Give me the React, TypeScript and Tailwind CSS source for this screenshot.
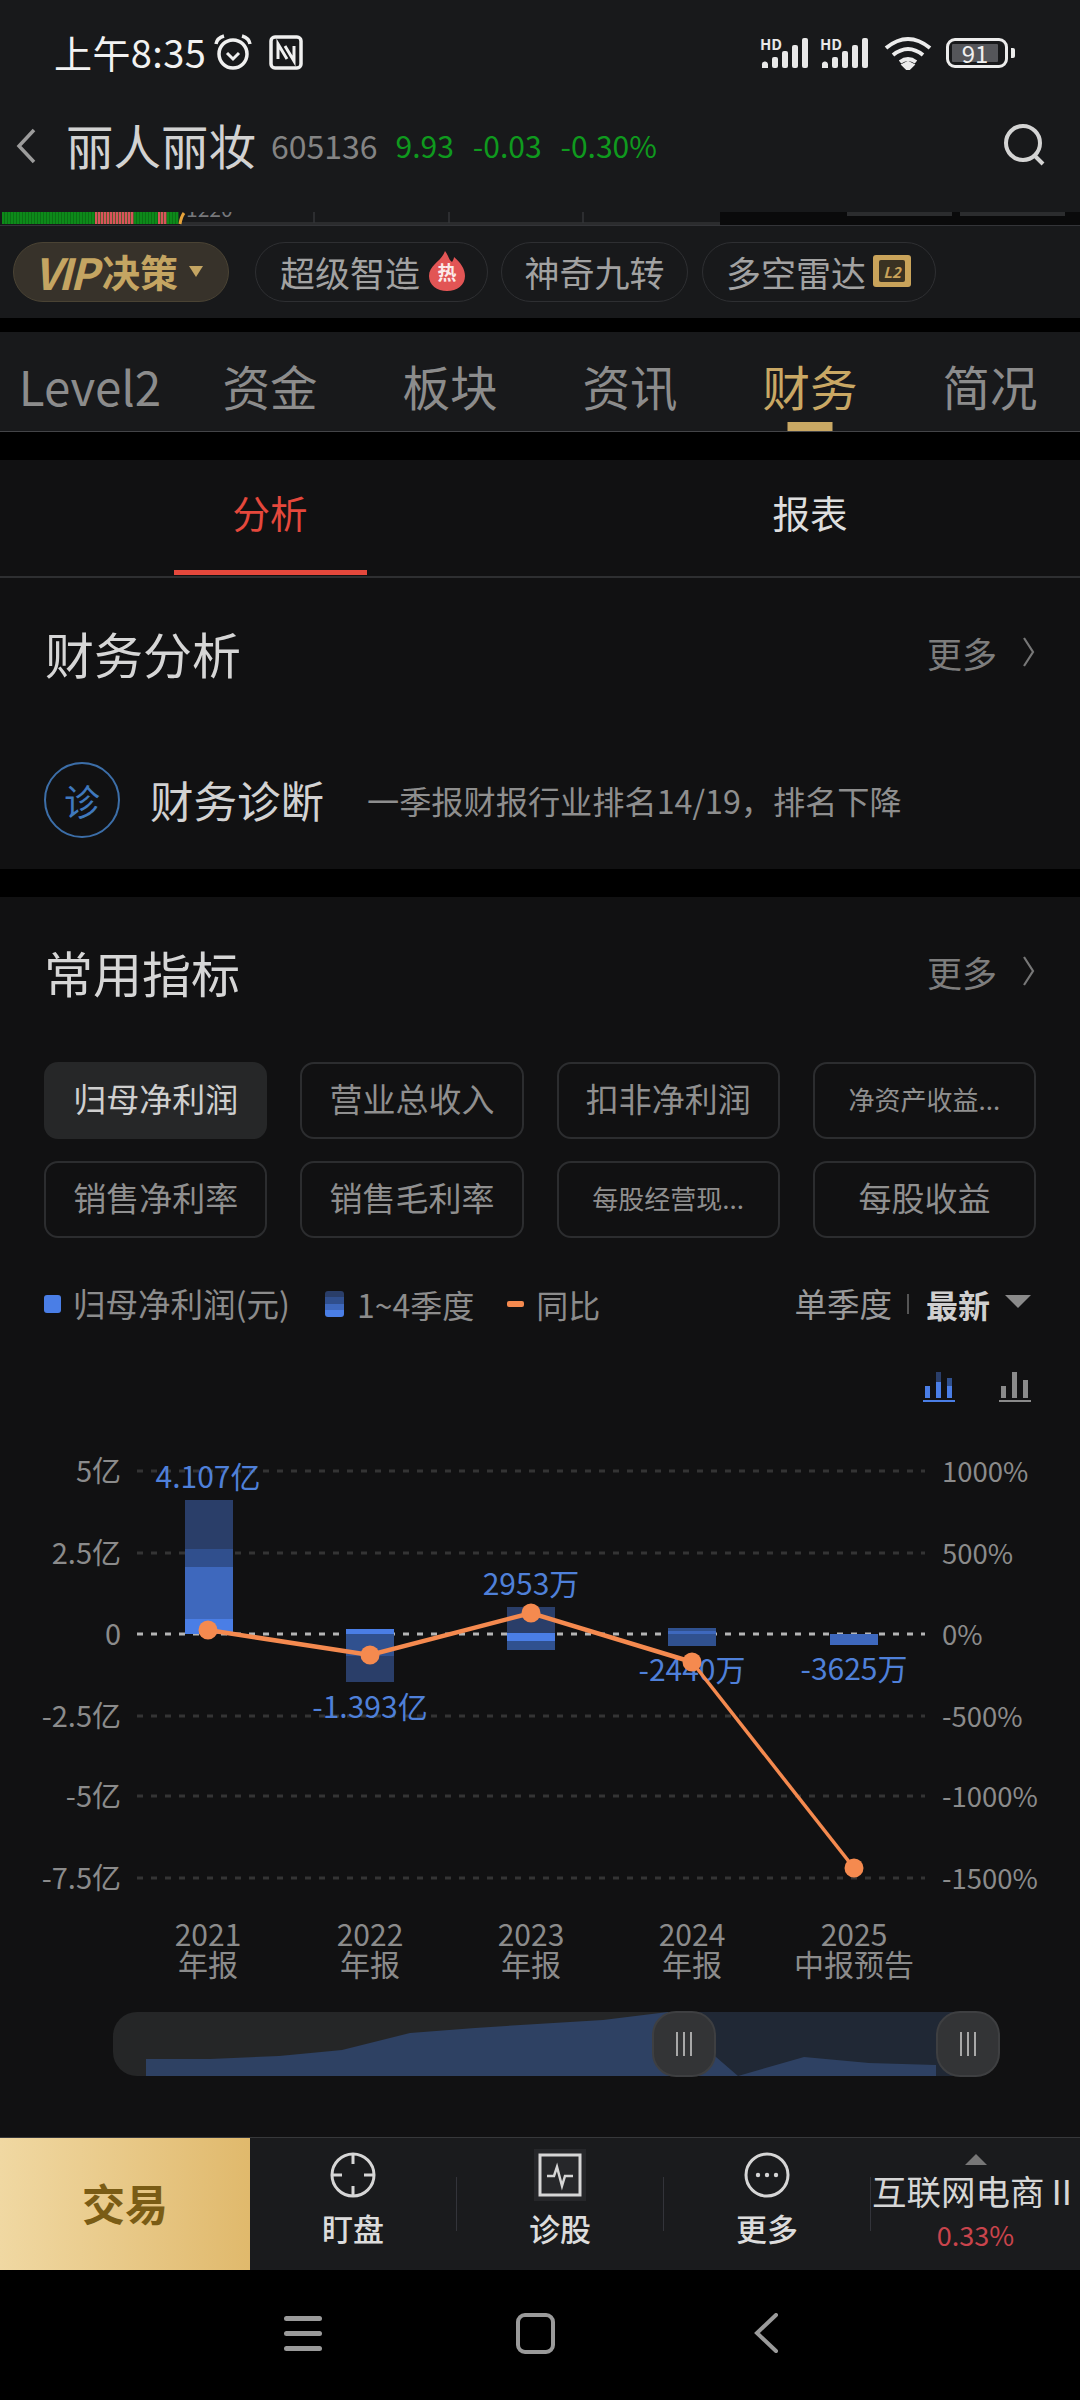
import React from "react";

const tabs = ["Level2", "资金", "板块", "资讯", "财务", "简况"];
const chips: [string, boolean][] = [
  ["归母净利润", false], ["营业总收入", false], ["扣非净利润", false], ["净资产收益...", true],
  ["销售净利率", false], ["销售毛利率", false], ["每股经营现...", true], ["每股收益", false],
];

function Signal() {
  return (
    <div className="relative w-[50px] h-[32px]">
      <span className="absolute left-0 top-0 text-[15px] leading-[14px] font-bold text-[#e8e8e8]">HD</span>
      <svg className="absolute inset-0" width="50" height="32" viewBox="0 0 50 32" fill="#e8e8e8">
        <path d="M2 31v-3a3 3 0 0 1 6-1v4z" />
        <rect x="12" y="20" width="6" height="11" rx="2" />
        <rect x="22" y="14" width="6" height="17" rx="2" />
        <rect x="32" y="8" width="6" height="23" rx="2" />
        <rect x="42" y="1" width="6" height="30" rx="2" />
      </svg>
    </div>
  );
}

function More() {
  return (
    <div className="flex items-center text-[#7d7d7d]">
      <span className="text-[35px] leading-none">更多</span>
      <svg className="ml-[24px]" width="16" height="32" viewBox="0 0 16 32" fill="none" stroke="#777" strokeWidth="2.2">
        <path d="M3 2l9 14-9 14" />
      </svg>
    </div>
  );
}

function Separator() {
  return <div className="w-px h-[54px] bg-[#33343a]" />;
}

function TopStrip() {
  const stripes = Array.from({ length: 59 }, (_, i) => {
    const x = 2 + i * 3;
    const red = (x >= 95 && x < 132) || (x >= 158 && x < 167);
    return <rect key={i} x={x} y="0" width="2.4" height="12" fill={red ? "#d9535b" : "#0d8a1a"} />;
  });
  return (
    <svg className="block" width="1080" height="13" viewBox="0 0 1080 13">
      <rect x="180" y="10" width="540" height="3" fill="#2b2c2e" />
      <rect x="2" y="0" width="176" height="12" fill="#0a5f12" />
      {stripes}
      <path d="M180 12q1-7 4-11" stroke="#e5a23a" strokeWidth="3" fill="none" />
      <text x="186" y="5" fontSize="21" fill="#77787b">1220</text>
      <path d="M314 0v11M449 0v11M583 0v11" stroke="#333438" strokeWidth="1.5" />
      <rect x="720" y="0" width="360" height="13" fill="#0a0a0b" />
      <rect x="847" y="0" width="105" height="4" fill="#2b2c2e" />
      <rect x="960" y="0" width="105" height="4" fill="#2b2c2e" />
    </svg>
  );
}

function Chart() {
  const grid: [number, string, string][] = [
    [1471, "5亿", "1000%"], [1553, "2.5亿", "500%"], [1634, "0", "0%"],
    [1716, "-2.5亿", "-500%"], [1796, "-5亿", "-1000%"], [1878, "-7.5亿", "-1500%"],
  ];
  const bars: [number, number, number, string][] = [
    [185, 1500, 49, "#2a3e69"], [185, 1549, 18, "#304f8d"], [185, 1567, 52, "#3e68bd"], [185, 1619, 15, "#4a7ee6"],
    [346, 1629, 5, "#4a7ee6"], [346, 1634, 22, "#30518f"], [346, 1656, 26, "#2a3e69"],
    [507, 1607, 26, "#2a3e69"], [507, 1633, 8, "#4a7ee6"], [507, 1641, 9, "#30518f"],
    [668, 1628, 3, "#30518f"], [668, 1631, 3, "#3e68bd"], [668, 1634, 12, "#30518f"],
    [830, 1634, 11, "#3e68bd"],
  ];
  const pts: [number, number][] = [[208, 1630], [370, 1655], [531, 1613], [692, 1662], [854, 1868]];
  const values: [number, number, string][] = [
    [208, 1488, "4.107亿"], [370, 1718, "-1.393亿"], [531, 1595, "2953万"], [692, 1681, "-2440万"], [854, 1680, "-3625万"],
  ];
  const xs: [number, string, string][] = [
    [208, "2021", "年报"], [370, "2022", "年报"], [531, "2023", "年报"], [692, "2024", "年报"], [854, "2025", "中报预告"],
  ];
  return (
    <div className="relative h-[600px]">
      <svg className="block" width="1080" height="600" viewBox="0 1402 1080 600">
        {grid.map(([y, l, r]) => (
          <g key={y}>
            <path d={`M137 ${y}H925`} stroke={y === 1634 ? "#b5b5b5" : "#343434"} strokeWidth="3" strokeDasharray="6 8" />
            <text x="121" y={y + 11} textAnchor="end" fontSize="29" fill="#8b8b8b">{l}</text>
            <text x="942" y={y + 11} fontSize="27.5" fill="#8b8b8b">{r}</text>
          </g>
        ))}
        {bars.map(([x, y, h, c], i) => (
          <rect key={i} x={x} y={y} width="48" height={h} fill={c} />
        ))}
        {values.map(([x, y, t]) => (
          <text key={t} x={x} y={y} textAnchor="middle" fontSize="30" fill="#4f80d9">{t}</text>
        ))}
        <polyline points="208,1630 370,1655 531,1613 692,1662" fill="none" stroke="#f58a4f" strokeWidth="4.5" />
        <polyline points="692,1662 854,1868" fill="none" stroke="#f58a4f" strokeWidth="3.5" />
        {pts.map(([x, y]) => (
          <circle key={x} cx={x} cy={y} r="9.5" fill="#f58a4f" />
        ))}
      </svg>
      {xs.map(([x, a, b]) => (
        <div key={a} className="absolute top-[517px] -translate-x-1/2 text-center text-[30px] text-[#8b8b8b] whitespace-nowrap" style={{ left: x }}>
          <div className="h-[29.5px] leading-[29.5px]">{a}</div>
          <div className="h-[29.5px] leading-[29.5px]">{b}</div>
        </div>
      ))}
    </div>
  );
}

function Handle({ className }: { className: string }) {
  return (
    <div className={`absolute top-[-1px] w-[64px] h-[66px] rounded-[24px] bg-[#333436] border-2 border-[#3e3f41] flex items-center justify-center gap-[5px] ${className}`}>
      <span className="w-[2px] h-[24px] bg-[#a8a8a8]" />
      <span className="w-[2px] h-[24px] bg-[#a8a8a8]" />
      <span className="w-[2px] h-[24px] bg-[#a8a8a8]" />
    </div>
  );
}

function Slider() {
  return (
    <div className="relative ml-[113px] mt-[10px] w-[887px] h-[64px]">
      <div className="absolute left-0 top-0 bottom-0 w-[600px] rounded-l-[24px] bg-[#252627]" />
      <svg className="absolute inset-0" width="887" height="64" viewBox="113 2012 887 64">
        <rect x="684" y="2012" width="284" height="64" fill="#202835" />
        <path d="M146 2076V2059H210L279 2056 342 2050 410 2033 475 2028 537 2024 603 2020 668 2012 716 2057 738 2076 804 2057 869 2063 936 2065V2076Z" fill="#2e4163" />
      </svg>
      <Handle className="left-[539px]" />
      <Handle className="left-[823px]" />
    </div>
  );
}

export default function App() {
  return (
    <div className="w-[1080px] h-[2400px] flex flex-col bg-black text-[#dcdcdc] overflow-hidden font-['Noto_Sans_CJK_SC','Noto_Sans',sans-serif]">
      {/* Status bar */}
      <div className="h-[104px] bg-[#18191b] flex items-center justify-between pl-[54px] pr-[65px]">
        <div className="flex items-center">
          <span className="text-[38px] leading-none text-[#f2f2f2] tracking-[0.4px]">上午8:35</span>
          <svg className="ml-[7px]" width="40" height="38" viewBox="0 0 40 38" fill="none" stroke="#f0f0f0" strokeWidth="3.5">
            <circle cx="20" cy="21" r="14" />
            <path d="M14 20l6 6 6-6" strokeWidth="3" />
            <path d="M3 11q1-6 8-8M37 11q-1-6-8-8" />
          </svg>
          <svg className="ml-[16px]" width="34" height="35" viewBox="0 0 34 35" fill="none" stroke="#f0f0f0" strokeWidth="3.5">
            <rect x="2" y="2" width="30" height="31" rx="4" />
            <path d="M9 24V9l9 15M25 11v15l-9-15" strokeWidth="3" />
          </svg>
        </div>
        <div className="flex items-center pt-[2px]">
          <Signal />
          <div className="ml-[10px]"><Signal /></div>
          <svg className="ml-[14px]" width="48" height="34" viewBox="0 0 48 34" fill="none" stroke="#ececec" strokeWidth="4">
            <path d="M2 12q22-18 44 0M9 19q15-12 30 0M16 26q8-6 16 0" />
            <path d="M24 33l-4-4 4-2 4 2z" fill="#ececec" />
          </svg>
          <div className="ml-[14px] w-[62px] h-[30px] rounded-[9px] border-[3px] border-[#ececec] p-[3px] relative">
            <div className="w-[46px] h-[18px] bg-[#55565a] rounded-[1px] flex items-center justify-center">
              <span className="text-[24px] leading-none text-[#f0f0f0]">91</span>
            </div>
          </div>
          <div className="ml-[3px] w-[4px] h-[10px] rounded-r-[2px] bg-[#ececec]" />
        </div>
      </div>

      {/* Stock header */}
      <div className="h-[108px] bg-[#18191b] pb-[26px] flex items-center pl-[14px] pr-[33px]">
        <svg className="mt-[2px]" width="24" height="38" viewBox="0 0 24 38" fill="none" stroke="#9c9c9c" strokeWidth="3.5">
          <path d="M20 3L5 19l15 16" />
        </svg>
        <span className="ml-[28px] text-[47.5px] leading-none text-[#d2d2d2]">丽人丽妆</span>
        <span className="ml-[15px] text-[32px] leading-none text-[#848484]">605136</span>
        <span className="ml-[18px] text-[30px] leading-none text-[#0f9a1e]">9.93</span>
        <span className="ml-[19px] text-[30px] leading-none text-[#0f9a1e]">-0.03</span>
        <span className="ml-[19px] text-[30px] leading-none text-[#0f9a1e]">-0.30%</span>
        <svg className="ml-auto" width="44" height="44" viewBox="0 0 44 44" fill="none" stroke="#d4d4d4" strokeWidth="4">
          <circle cx="20" cy="20" r="17" />
          <path d="M31 32l9 9" />
        </svg>
      </div>

      {/* Strip */}
      <div className="bg-[#18191b]"><TopStrip /></div>

      {/* Pills */}
      <div className="h-[93px] bg-[#18191b] border-t border-[#333438] pt-[16px] pl-[13px] flex items-start">
        <div className="h-[60px] w-[216px] rounded-full bg-[#37322a] border border-[#4a4334] flex items-center pl-[20px] pb-[2px] text-[#c4a562]">
          <span className="text-[43px] leading-none font-bold italic tracking-[-2.5px]">VIP</span>
          <span className="ml-[6px] text-[38px] leading-none font-bold">决策</span>
          <span className="ml-[11px] w-0 h-0 border-l-[7px] border-r-[7px] border-t-[11px] border-l-transparent border-r-transparent border-t-[#c4a562]" />
        </div>
        <div className="ml-[26px] h-[60px] w-[233px] rounded-full border border-[#2e2f32] flex items-center pl-[24px] pb-[2px] text-[#a2a2a2]">
          <span className="text-[35px] leading-none">超级智造</span>
          <div className="relative ml-[9px] w-[36px] h-[40px]">
            <svg className="absolute inset-0" width="36" height="40" viewBox="0 0 36 40" fill="#e25555">
              <path d="M16 0c4 5 3 8 7 11 1-2 2-3 2-5 7 6 11 12 11 19 0 9-8 15-18 15S0 34 0 25C0 14 13 10 16 0z" />
            </svg>
            <span className="absolute inset-0 top-[7px] text-center text-[19px] leading-[28px] font-bold text-[#fbeaea]">热</span>
          </div>
        </div>
        <div className="ml-[13px] h-[60px] w-[187px] rounded-full border border-[#2e2f32] flex items-center justify-center pb-[2px] text-[#a2a2a2]">
          <span className="text-[35px] leading-none">神奇九转</span>
        </div>
        <div className="ml-[14px] h-[60px] w-[234px] rounded-full border border-[#2e2f32] flex items-center pl-[23px] pb-[2px] text-[#a2a2a2]">
          <span className="text-[35px] leading-none">多空雷达</span>
          <div className="ml-[7px] w-[38px] h-[32px] rounded-[3px] bg-[#c9a35a] flex items-center justify-center">
            <div className="w-[26px] h-[22px] rounded-[2px] bg-[#3a3222] flex items-center justify-center">
              <span className="text-[15px] leading-none font-bold italic text-[#c9a35a]">L2</span>
            </div>
          </div>
        </div>
      </div>

      {/* Main tabs */}
      <div className="mt-[14px] h-[100px] bg-[#18191b] border-b border-[#444548] grid grid-cols-6">
        {tabs.map((t) => (
          <div key={t} className="relative flex items-center justify-center pt-[8px]">
            <span className={`text-[47.5px] leading-none ${t === "财务" ? "text-[#c9a864]" : "text-[#8c8c8c]"}`}>{t}</span>
            {t === "财务" && <span className="absolute bottom-0 left-1/2 -translate-x-1/2 w-[45px] h-[9px] bg-[#c9a864]" />}
          </div>
        ))}
      </div>

      {/* Analysis panel */}
      <div className="mt-[28px] h-[409px] bg-[#111112] flex flex-col">
        <div className="h-[118px] border-b-2 border-[#2e2f31] grid grid-cols-2">
          <div className="relative flex items-center justify-center pb-[12px]">
            <span className="text-[37.5px] leading-none text-[#e5483c]">分析</span>
            <span className="absolute bottom-[1px] left-[174px] w-[193px] h-[5px] bg-[#e5483c]" />
          </div>
          <div className="flex items-center justify-center pb-[12px]">
            <span className="text-[37.5px] leading-none text-[#dedede]">报表</span>
          </div>
        </div>
        <div className="h-[154px] flex items-center justify-between pl-[45px] pr-[43px] pb-[6px]">
          <span className="text-[49px] leading-none text-[#d6d6d6]">财务分析</span>
          <More />
        </div>
        <div className="h-[137px] pb-[1px] flex items-center pl-[44px]">
          <div className="w-[76px] h-[76px] rounded-full border-2 border-[#3c6ea8] flex items-center justify-center">
            <span className="text-[36px] leading-none text-[#3f78bd]">诊</span>
          </div>
          <span className="ml-[30px] text-[43.5px] leading-none text-[#d2d2d2]">财务诊断</span>
          <span className="ml-[43px] text-[32.2px] leading-none text-[#8e8e8e]">一季报财报行业排名14/19，排名下降</span>
        </div>
      </div>

      {/* Indicators panel */}
      <div className="mt-[28px] flex-1 bg-[#111112] flex flex-col">
        <div className="h-[154px] flex items-center justify-between pl-[44px] pr-[43px] pb-[6px]">
          <span className="text-[49px] leading-none text-[#d6d6d6]">常用指标</span>
          <More />
        </div>
        <div className="mt-[11px] mx-[44px] grid grid-cols-4 gap-x-[33px] gap-y-[22px]">
          {chips.map(([t, small], i) => (
            <div
              key={t}
              className={`h-[77px] rounded-[14px] flex items-center justify-center pb-[4px] ${i === 0 ? "bg-[#262728] text-[#cfcfcf]" : "border-2 border-[#2c2d2f] text-[#8f8f8f]"}`}
            >
              <span className={`${small ? "text-[26px]" : "text-[33px]"} leading-none`}>{t}</span>
            </div>
          ))}
        </div>
        <div className="mt-[40px] h-[56px] flex items-center pl-[44px] pr-[49px] pb-[5px] text-[#8c8c8c]">
          <span className="w-[17px] h-[18px] rounded-[3px] bg-[#4a7ee6]" />
          <span className="ml-[12px] text-[32.5px] leading-none">归母净利润(元)</span>
          <div className="ml-[35px] w-[19px] h-[26px] rounded-[3px] overflow-hidden flex flex-col">
            <span className="flex-1 bg-[#2a3e69]" />
            <span className="flex-1 bg-[#304f8d]" />
            <span className="flex-1 bg-[#3e68bd]" />
            <span className="flex-1 bg-[#4a7ee6]" />
          </div>
          <span className="ml-[13px] text-[32px] leading-none">1~4季度</span>
          <span className="ml-[33px] w-[17px] h-[6px] rounded-[2px] bg-[#f58a4f]" />
          <span className="ml-[12px] text-[32px] leading-none">同比</span>
          <span className="ml-auto text-[32.5px] leading-none text-[#9a9a9a]">单季度</span>
          <span className="ml-[15px] w-[2px] h-[20px] bg-[#555]" />
          <span className="ml-[17px] text-[32px] leading-none font-bold text-[#cfcfcf]">最新</span>
          <span className="ml-[15px] mb-[4px] w-0 h-0 border-l-[13px] border-r-[13px] border-t-[13px] border-l-transparent border-r-transparent border-t-[#8a8a8a]" />
        </div>
        <div className="mt-[38px] h-[30px] flex justify-end gap-[44px] pr-[49px]">
          <svg width="32" height="30" viewBox="0 0 32 30">
            <rect x="2" y="14" width="5" height="12" fill="#4a7ee6" />
            <rect x="13" y="0" width="5" height="10" fill="#2a3e69" />
            <rect x="13" y="10" width="5" height="16" fill="#4a7ee6" />
            <rect x="24" y="6" width="5" height="8" fill="#30518f" />
            <rect x="24" y="14" width="5" height="12" fill="#4a7ee6" />
            <rect x="0" y="28" width="32" height="2" fill="#4a7ee6" />
          </svg>
          <svg width="32" height="30" viewBox="0 0 32 30" fill="#8a8a8a">
            <rect x="2" y="14" width="5" height="12" />
            <rect x="13" y="0" width="5" height="26" />
            <rect x="24" y="8" width="5" height="18" />
            <rect x="0" y="28" width="32" height="2" />
          </svg>
        </div>
        <Chart />
        <Slider />
      </div>

      {/* Bottom toolbar */}
      <div className="h-[133px] bg-[#1a1b1d] border-t border-[#37383a] flex">
        <div className="w-[250px] shrink-0 bg-gradient-to-r from-[#f0d8a2] to-[#e0b96c] flex items-center justify-center pb-[4px]">
          <span className="text-[43px] leading-none font-bold text-[#7a5c15]">交易</span>
        </div>
        <div className="w-[207px] shrink-0 flex items-center">
          <div className="flex-1 self-start pt-[14px] flex flex-col items-center">
            <svg width="46" height="46" viewBox="0 0 46 46" fill="none" stroke="#d6d6d6" strokeWidth="3">
              <circle cx="23" cy="23" r="21" />
              <path d="M23 2v10M23 34v10M2 23h10M34 23h10" />
            </svg>
            <span className="mt-[14px] text-[31px] leading-none font-medium text-[#dcdcdc]">盯盘</span>
          </div>
          <Separator />
        </div>
        <div className="w-[207px] shrink-0 flex items-center">
          <div className="flex-1 self-start pt-[11px] flex flex-col items-center">
            <div className="w-[52px] h-[52px] bg-[#26272a] flex items-center justify-center">
              <svg width="44" height="44" viewBox="0 0 44 44" fill="none" stroke="#d6d6d6" strokeWidth="3">
                <rect x="2" y="2" width="40" height="40" />
                <path d="M9 23h7l3-9 5 19 3-10h8" strokeWidth="2.5" />
              </svg>
            </div>
            <span className="mt-[11px] text-[31px] leading-none font-medium text-[#dcdcdc]">诊股</span>
          </div>
          <Separator />
        </div>
        <div className="w-[207px] shrink-0 flex items-center">
          <div className="flex-1 self-start pt-[14px] flex flex-col items-center">
            <svg width="46" height="46" viewBox="0 0 46 46" fill="#d6d6d6">
              <circle cx="23" cy="23" r="21" fill="none" stroke="#d6d6d6" strokeWidth="3" />
              <circle cx="14" cy="23" r="2.2" />
              <circle cx="23" cy="23" r="2.2" />
              <circle cx="32" cy="23" r="2.2" />
            </svg>
            <span className="mt-[14px] text-[31px] leading-none font-medium text-[#dcdcdc]">更多</span>
          </div>
          <Separator />
        </div>
        <div className="flex-1 min-w-0 flex flex-col items-center pt-[16px]">
          <span className="w-0 h-0 border-l-[11px] border-r-[11px] border-b-[11px] border-l-transparent border-r-transparent border-b-[#777]" />
          <span className="mt-[8px] text-[34.5px] leading-none text-[#d6d6d6] whitespace-nowrap">互联网电商Ⅱ</span>
          <span className="mt-[13px] text-[27px] leading-none text-[#c9444c]">0.33%</span>
        </div>
      </div>

      {/* System nav */}
      <div className="h-[130px] bg-black flex items-center pb-[4px]">
        <div className="ml-[284px] w-[38px] flex flex-col gap-[10px]">
          <span className="h-[5px] rounded-full bg-[#9a9a9a]" />
          <span className="h-[5px] rounded-full bg-[#9a9a9a]" />
          <span className="h-[5px] rounded-full bg-[#9a9a9a]" />
        </div>
        <div className="ml-[194px] w-[39px] h-[41px] rounded-[9px] border-[4px] border-[#9a9a9a]" />
        <svg className="ml-[199px]" width="25" height="40" viewBox="0 0 25 40" fill="none" stroke="#9a9a9a" strokeWidth="4" strokeLinecap="round">
          <path d="M22 2L3 20l19 18" />
        </svg>
      </div>
    </div>
  );
}
